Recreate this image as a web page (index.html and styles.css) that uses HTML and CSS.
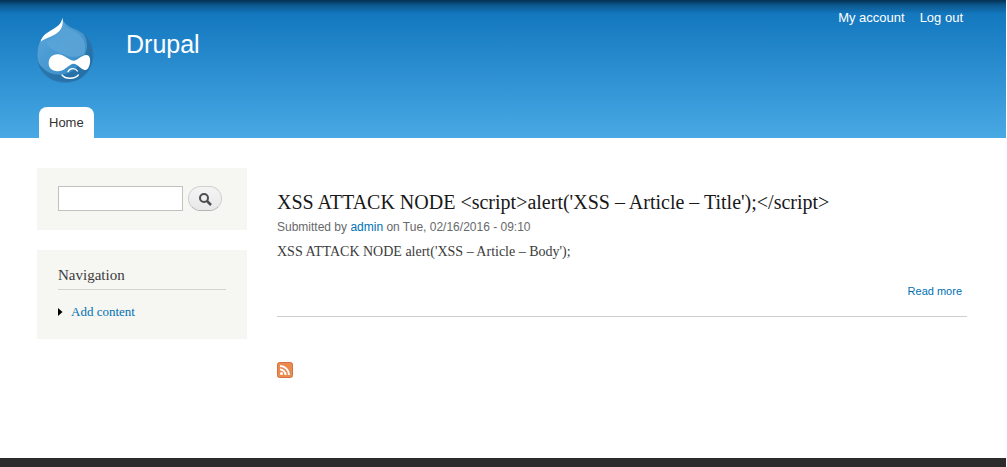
FILE: index.html
```html
<!DOCTYPE html>
<html lang="en">
<head>
<meta charset="utf-8">
<title>Drupal</title>
<link rel="stylesheet" href="styles.css">
</head>
<body>
<header class="header">
  <div class="branding">
    <a class="logo" href="#" aria-label="Home page">
      <svg width="58" height="66" viewBox="33 37 174 198" aria-hidden="true">
        <defs>
          <linearGradient id="drop" x1="0" y1="0" x2="1" y2="1">
            <stop offset="0" stop-color="#5ba8dc"/>
            <stop offset=".5" stop-color="#4798d1"/>
            <stop offset="1" stop-color="#2c7fbc"/>
          </linearGradient>
          <linearGradient id="shine" x1="0" y1="0" x2="1" y2="1">
            <stop offset="0" stop-color="#a5d3ef" stop-opacity="0"/>
            <stop offset="1" stop-color="#a5d3ef" stop-opacity=".3"/>
          </linearGradient>
        </defs>
        <path fill="url(#drop)" stroke="#2b78b0" stroke-width="2" d="M112 39C117 60 135 66 159 77C187 91 204 116 204 150C204 199 168 233 120 233C71 233 36 197 36 150C36 121 46 101 62 89C84 74 108 66 112 39Z"/>
        <path fill="#22699f" opacity=".75" d="M176 88C199 108 204 132 203 153C202 200 168 232 120 232C77 232 47 207 39 172C57 202 84 212 108 210C145 208 165 180 180 151C190 130 188 108 176 88Z"/>
        <path fill="url(#shine)" d="M113 62C127 72 150 78 165 92C181 108 184 130 177 148C160 158 140 160 118 150C97 143 60 125 66 110C90 100 108 85 113 62Z"/>
        <path fill="#fff" d="M112 39C116 57 111 72 99 83C82 98 58 101 47 111C50 96 63 85 80 76C97 66 110 57 112 39Z"/>
        <path fill="#fff" d="M98 149C118 149 132 168 145 168C159 168 169 151 184 151C193 151 197 161 195 174C193 187 187 198 179 196C167 194 158 177 146 177C132 177 121 200 97 200C80 200 71 189 71 176C71 160 81 149 98 149Z"/>
        <path fill="none" stroke="#fff" stroke-width="4" stroke-linecap="round" d="M129 201C134 190 151 189 157 199M111 211C122 225 150 223 160 211"/>
      </svg>
    </a>
    <a class="site-name" href="#">Drupal</a>
    <nav class="user-menu" aria-label="User menu">
      <a href="#">My account</a>
      <a href="#">Log out</a>
    </nav>
  </div>
  <nav class="main-menu" aria-label="Main menu"><a class="tab" href="#">Home</a></nav>
</header>
<div class="page">
  <aside class="sidebar">
    <form class="block search">
      <input class="search-field" type="search" aria-label="Search">
      <button class="search-button" type="button" aria-label="Search">
        <svg width="14" height="14" viewBox="0 0 14 14" aria-hidden="true"><g fill="none" stroke="#4b4b50"><circle cx="6" cy="6" r="4" stroke-width="2"/><path stroke-width="2.5" d="M9 9L13 13"/></g></svg>
      </button>
    </form>
    <section class="block navigation">
      <h2 class="block-title">Navigation</h2>
      <ul class="menu">
        <li><svg class="arrow" width="5" height="8" viewBox="0 0 5 8" aria-hidden="true"><path d="M0 0L4.500 4L0 8Z"/></svg><a href="#">Add content</a></li>
      </ul>
    </section>
  </aside>
  <main class="content">
    <article class="node">
      <h2 class="node-title"><a href="#">XSS ATTACK NODE &lt;script&gt;alert('XSS – Article – Title');&lt;/script&gt;</a></h2>
      <p class="meta">Submitted by <a href="#">admin</a> on Tue, 02/16/2016 - 09:10</p>
      <p class="body-text">XSS ATTACK NODE alert('XSS – Article – Body');</p>
      <div class="node-links"><a href="#">Read more</a></div>
    </article>
    <a class="feed" href="#" aria-label="Subscribe to feed">
      <svg width="16" height="16" viewBox="0 0 16 16" aria-hidden="true">
        <rect x=".5" y=".5" width="15" height="15" rx="2" fill="#e98a50" stroke="#d8703f"/>
        <circle cx="4.500" cy="11.500" r="1.500" fill="#fff"/>
        <path fill="none" stroke="#fff" stroke-width="2" d="M3 7.500A5.500 5.500 0 0 1 8.500 13M3 4A9 9 0 0 1 12 13"/>
      </svg>
    </a>
  </main>
</div>
<footer class="footer"></footer>
</body>
</html>
```
FILE: styles.css
```css
* { box-sizing: border-box; }
body {
  display: flex;
  flex-direction: column;
  min-height: 100vh;
  margin: 0;
  padding-right: 1px;
  background: #fff;
  color: #3b3b3b;
  font-family: "Liberation Serif", "Times New Roman", serif;
  font-size: 14px;
}
h2, p, ul { margin: 0; padding: 0; font-weight: normal; }
a { color: #0071b3; text-decoration: none; }

.header {
  padding: 0 43px 0 36px;
  background:
    linear-gradient(rgba(0, 20, 35, .7), rgba(0, 20, 35, .3) 5px, transparent 14px),
    linear-gradient(#0f73ba, #167ac1 14%, #48a9e4);
  font-family: "Liberation Sans", Arial, sans-serif;
}
.branding { display: flex; align-items: flex-start; height: 107px; }
.logo { display: flex; margin-top: 17px; }
.site-name {
  margin: 29px auto 0 32px;
  color: #fff;
  font-size: 25px;
  line-height: 30px;
}
.user-menu { display: flex; gap: 15px; margin-top: 10px; font-size: 13px; line-height: 16px; }
.user-menu a { color: #fff; }
.main-menu { display: flex; padding-left: 3px; }
.tab {
  padding: 0 10px;
  border-radius: 8px 8px 0 0;
  background: #fff;
  color: #333;
  font-size: 13px;
  line-height: 31px;
}

.page { display: flex; gap: 30px; padding: 30px 39px 80px 37px; }
.sidebar { flex: 0 0 210px; }
.block { padding: 18px 21px; background: #f6f6f2; }
.search { display: flex; gap: 5px; margin-bottom: 20px; padding-bottom: 19px; }
.search-field {
  width: 125px;
  height: 25px;
  margin: 0;
  border: 1px solid #c2c2bc;
  background: #fff;
  appearance: none;
}
.search-button {
  display: flex;
  align-items: center;
  justify-content: center;
  width: 34px;
  height: 25px;
  padding: 0;
  border: 1px solid #d0d0d0;
  border-bottom-color: #b4b4b4;
  border-radius: 13px;
  background: linear-gradient(#f4f4f4, #e8e8e8);
}
.navigation { padding-top: 17px; }
.block-title {
  padding-bottom: 5px;
  border-bottom: 1px solid #d3d3d0;
  font-size: 15px;
  line-height: 17px;
}
.menu { padding-top: 13px; list-style: none; font-size: 13px; line-height: 18px; }
.menu li { display: flex; align-items: center; gap: 8px; }

.content { flex: 1; min-width: 0; }
.node { padding-top: 22px; border-bottom: 1px solid #cfcfcf; }
.node-title { font-size: 20px; line-height: 24px; }
.node-title a { color: #181818; }
.meta {
  margin-top: 5px;
  color: #68696b;
  font-family: "Liberation Sans", Arial, sans-serif;
  font-size: 12px;
  line-height: 16px;
}
.body-text { margin-top: 7px; line-height: 20px; }
.node-links {
  padding: 21px 5px 17px;
  font-family: "Liberation Sans", Arial, sans-serif;
  font-size: 11px;
  line-height: 16px;
  text-align: right;
}
.feed { display: flex; width: 16px; margin-top: 45px; }
.footer { flex: 1 0 9px; background: #2b2b2b; }
```
